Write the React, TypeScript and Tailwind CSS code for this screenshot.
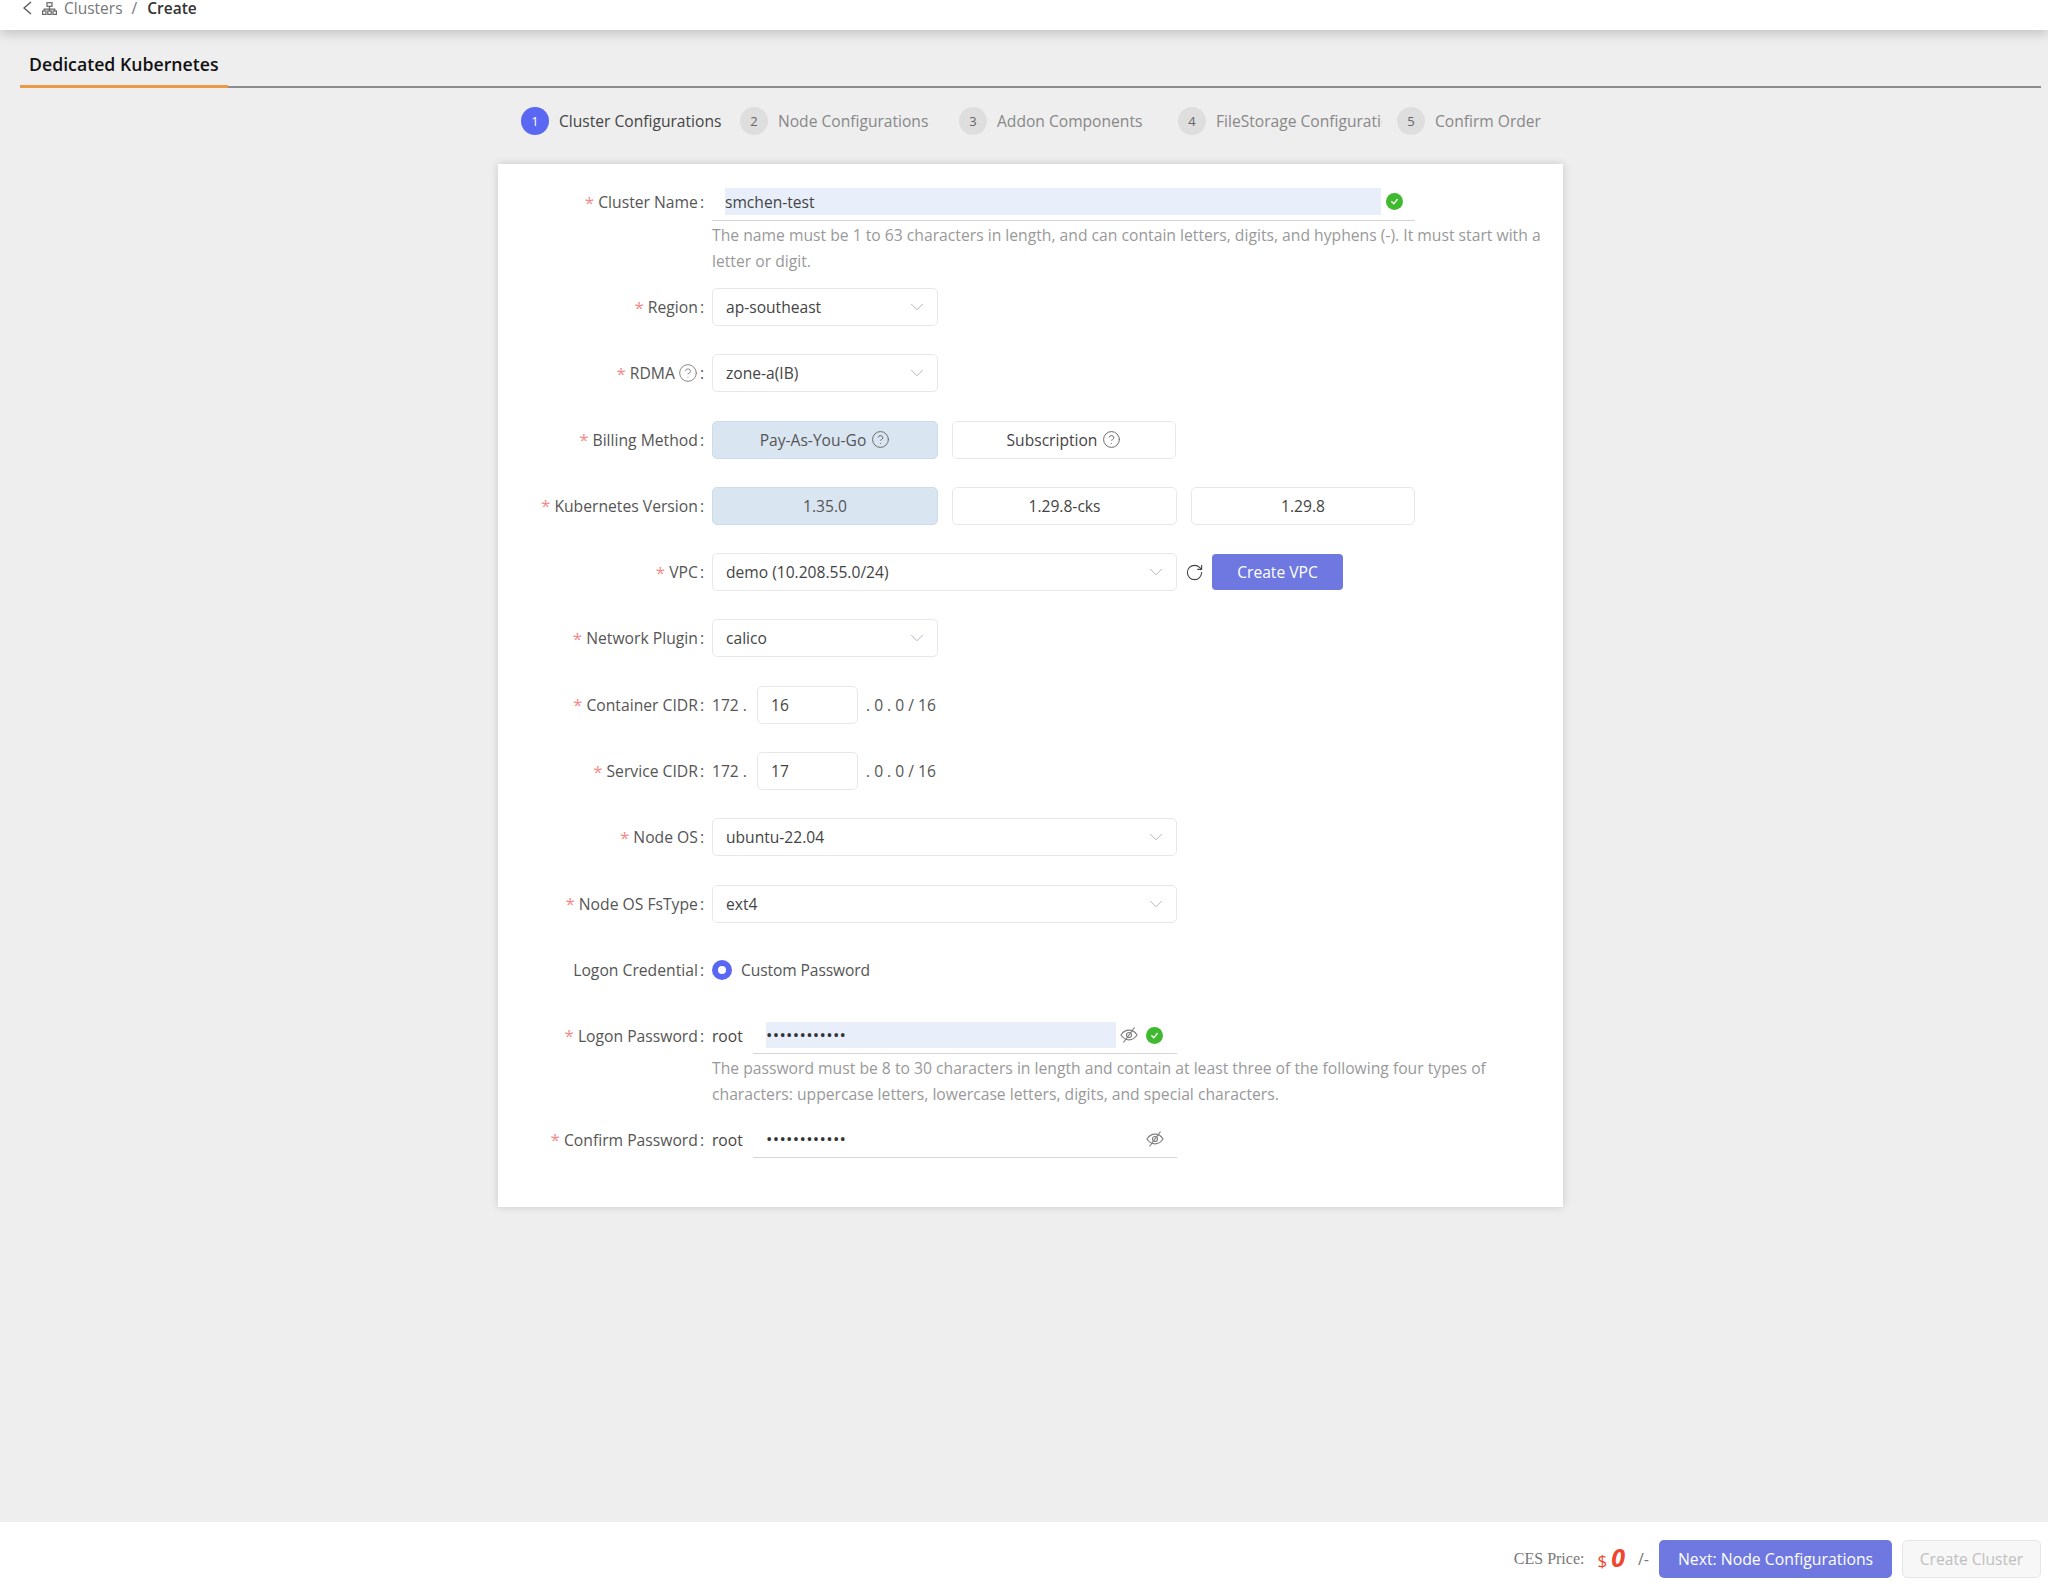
import React from "react";
import { ChevronDown, RotateCw, CircleHelp } from "lucide-react";

const font = "font-['Open_Sans','Noto_Sans',sans-serif]";

function Label({ text, required = true, help = false }: { text: string; required?: boolean; help?: boolean }) {
  return (
    <div className="w-[214px] shrink-0 flex items-center justify-end pr-[8px] text-[#555] text-[15.7px] whitespace-nowrap">
      {required && <span className="text-[#f48a8a] mr-[4px] text-[17px] leading-none">*</span>}
      <span>{text}</span>
      {help && <CircleHelp className="w-[20px] h-[20px] ml-[3px] text-[#888]" strokeWidth={1.2} />}
      <span className="ml-[2px]">:</span>
    </div>
  );
}

function Select({ value, wide = false }: { value: string; wide?: boolean }) {
  return (
    <div className={`${wide ? "w-[465px]" : "w-[226px]"} h-[38px] border-[1.5px] border-[#e8e8ec] rounded-[5px] bg-white flex items-center justify-between pl-[13px] pr-[9px] text-[15.6px] text-[#444]`}>
      <span>{value}</span>
      <ChevronDown className="w-[22px] h-[22px] text-[#aaafbb]" strokeWidth={1} />
    </div>
  );
}

function Row({ label, required = true, help = false, children }: { label: string; required?: boolean; help?: boolean; children: React.ReactNode }) {
  return (
    <div className="flex items-center h-[38px] mb-[28.3px]">
      <Label text={label} required={required} help={help} />
      {children}
    </div>
  );
}

function Choice({ active = false, children, width }: { active?: boolean; children: React.ReactNode; width: string }) {
  return (
    <div className={`${width} h-[38px] rounded-[5px] border-[1.5px] flex items-center justify-center text-[15.6px] ${active ? "bg-[#d9e5f1] border-[#cedbe9] text-[#555]" : "bg-white border-[#e8e8ec] text-[#444]"}`}>
      {children}
    </div>
  );
}

function OkIcon() {
  return (
    <span className="w-[17px] h-[17px] rounded-full bg-[#3fb92f] flex items-center justify-center shrink-0">
      <svg viewBox="0 0 12 12" className="w-[11px] h-[11px]" fill="none" stroke="white" strokeWidth="1.4" strokeLinecap="round" strokeLinejoin="round">
        <path d="M3 6.3 5.2 8.5 9 3.8" />
      </svg>
    </span>
  );
}

function EyeSlash() {
  return (
    <svg viewBox="0 0 18 18" className="w-[18px] h-[18px] shrink-0" fill="none" stroke="#808080" strokeWidth="1.2">
      <path d="M1 9c2-3.2 4.800-4.800 8-4.800s6 1.600 8 4.800c-2 3.200-4.800 4.800-8 4.800S3 12.200 1 9Z" />
      <circle cx="9" cy="9" r="2.500" />
      <path d="M14.500 1.500 3.500 16.500" />
    </svg>
  );
}

function Step({ n, text, active = false, clip = false, last = false }: { n: number; text: string; active?: boolean; clip?: boolean; last?: boolean }) {
  return (
    <div className={`flex items-center ${last ? "" : "w-[219px]"} shrink-0`}>
      <span className={`w-[28px] h-[28px] rounded-full flex items-center justify-center text-[13px] shrink-0 ${active ? "bg-[#5a67f2] text-white" : "bg-[#dedede] text-[#666]"}`}>{n}</span>
      <span className={`ml-[10px] text-[15.6px] whitespace-nowrap ${active ? "text-[#444]" : "text-[#888]"} ${clip ? "w-[166px] overflow-hidden" : ""}`}>{text}</span>
    </div>
  );
}

function CidrRow({ label, value }: { label: string; value: string }) {
  return (
    <Row label={label}>
      <span className="text-[#555] text-[15.6px] w-[45px]">172 .</span>
      <div className="w-[101px] h-[38px] border-[1.5px] border-[#e8e8ec] rounded-[5px] flex items-center pl-[13px] text-[15.6px] text-[#444]">{value}</div>
      <span className="text-[#555] text-[15.6px] ml-[8px]">. 0 . 0 / 16</span>
    </Row>
  );
}

export default function App() {
  return (
    <div className={`${font} leading-[24px] h-[1591px] bg-[#eeeeee] flex flex-col`}>
      <header className="h-[30px] shrink-0 bg-white shadow-[0_4px_12px_rgba(0,0,0,0.18)] flex items-center pb-[14px] pl-[22px] text-[15.5px] relative">
        <svg viewBox="0 0 10 14" className="w-[10px] h-[14px]" fill="none" stroke="#555" strokeWidth="1.3"><path d="M9 1 2 7l7 6" /></svg>
        <svg viewBox="0 0 15 13" className="w-[15px] h-[13px] ml-[10px]" fill="none" stroke="#666" strokeWidth="1.2">
          <rect x="5" y="0.700" width="5" height="3.600" />
          <path d="M7.500 4.300v3M2.200 9V7.200h10.600V9M7.500 7.200V9" />
          <rect x="0.600" y="9" width="3.400" height="3.400" />
          <rect x="5.800" y="9" width="3.400" height="3.400" />
          <rect x="11" y="9" width="3.400" height="3.400" />
        </svg>
        <span className="ml-[7px] text-[#777]">Clusters</span>
        <span className="ml-[9px] text-[#777]">/</span>
        <span className="ml-[10px] font-semibold text-[#333]">Create</span>
      </header>

      <div className="ml-[20px] mr-[7px] h-[58px] border-b-2 border-[#8c8c8c] shrink-0 flex items-end">
        <div className="w-[208px] h-[38px] border-b-[3px] border-[#ec9a45] -mb-[2px] pl-[9px] pt-[2px] text-[17.7px] font-semibold text-[#111] whitespace-nowrap flex items-start">Dedicated Kubernetes</div>
      </div>

      <div className="flex items-center pl-[521px] h-[28px] mt-[19px] shrink-0">
        <Step n={1} text="Cluster Configurations" active />
        <Step n={2} text="Node Configurations" />
        <Step n={3} text="Addon Components" />
        <Step n={4} text="FileStorage Configurations" clip />
        <Step n={5} text="Confirm Order" last />
      </div>

      <main className="ml-[498px] mt-[29px] w-[1065px] h-[1043px] shrink-0 bg-white shadow-[0_0_8px_rgba(0,0,0,0.16)] pt-[19px]">
        <div className="flex h-[38px]">
          <div className="flex items-center h-[38px]"><Label text="Cluster Name" /></div>
          <div className="w-[703px] h-[38px] border-b border-[#d5d5d5] flex items-center pl-[13px] gap-[5px]">
            <div className="w-[656px] h-[27px] bg-[#e8effb] flex items-center text-[15.6px] text-[#444]">smchen-test</div>
            <OkIcon />
          </div>
        </div>
        <p className="ml-[214px] mr-[20px] mt-[2px] mb-[14px] text-[15.7px] leading-[25.5px] text-[#999]">The name must be 1 to 63 characters in length, and can contain letters, digits, and hyphens (-). It must start with a letter or digit.</p>

        <Row label="Region"><Select value="ap-southeast" /></Row>
        <Row label="RDMA" help><Select value="zone-a(IB)" /></Row>
        <Row label="Billing Method">
          <div className="flex gap-[14px]">
            <Choice active width="w-[226px]">Pay-As-You-Go <CircleHelp className="w-[19px] h-[19px] ml-[5px] text-[#666]" strokeWidth={1.2} /></Choice>
            <Choice width="w-[224px]">Subscription <CircleHelp className="w-[19px] h-[19px] ml-[5px] text-[#666]" strokeWidth={1.2} /></Choice>
          </div>
        </Row>
        <Row label="Kubernetes Version">
          <div className="flex gap-[14px]">
            <Choice active width="w-[226px]">1.35.0</Choice>
            <Choice width="w-[225px]">1.29.8-cks</Choice>
            <Choice width="w-[224px]">1.29.8</Choice>
          </div>
        </Row>
        <Row label="VPC">
          <Select value="demo (10.208.55.0/24)" wide />
          <RotateCw className="w-[19px] h-[19px] ml-[8px] text-[#444]" strokeWidth={1.4} />
          <button className="ml-[8px] w-[131px] h-[36px] rounded-[4px] bg-[#6e78e0] text-white text-[15.6px]">Create VPC</button>
        </Row>
        <Row label="Network Plugin"><Select value="calico" /></Row>
        <CidrRow label="Container CIDR" value="16" />
        <CidrRow label="Service CIDR" value="17" />
        <Row label="Node OS"><Select value="ubuntu-22.04" wide /></Row>
        <Row label="Node OS FsType"><Select value="ext4" wide /></Row>
        <Row label="Logon Credential" required={false}>
          <span className="w-[20px] h-[20px] rounded-full bg-[#5a67f2] flex items-center justify-center shrink-0"><span className="w-[8px] h-[8px] rounded-full bg-white" /></span>
          <span className="ml-[9px] text-[15.6px] text-[#555] tracking-[-0.1px]">Custom Password</span>
        </Row>

        <div className="flex h-[37px] items-center">
          <Label text="Logon Password" />
          <span className="w-[41px] text-[15.6px] text-[#444]">root</span>
          <div className="w-[424px] h-[37px] border-b border-[#d5d5d5] flex items-center pl-[13px]">
            <div className="w-[350px] h-[26px] bg-[#e8effb] flex items-center text-[17px] text-[#333] tracking-[0.3px]">••••••••••••</div>
            <span className="ml-[4px]"><EyeSlash /></span>
            <span className="ml-[8px]"><OkIcon /></span>
          </div>
        </div>
        <p className="ml-[214px] mr-[60px] mt-[2px] mb-[14px] text-[15.7px] leading-[25.5px] text-[#999]">The password must be 8 to 30 characters in length and contain at least three of the following four types of characters: uppercase letters, lowercase letters, digits, and special characters.</p>

        <div className="flex h-[37px] items-center">
          <Label text="Confirm Password" />
          <span className="w-[41px] text-[15.6px] text-[#444]">root</span>
          <div className="w-[424px] h-[37px] border-b border-[#d5d5d5] flex items-center justify-between pl-[13px] pr-[13px]">
            <span className="text-[17px] text-[#333] tracking-[0.3px]">••••••••••••</span>
            <EyeSlash />
          </div>
        </div>
      </main>

      <footer className="mt-auto h-[69px] shrink-0 bg-white flex items-center justify-end pr-[7px] pt-[5px] gap-[10px]">
        <span className="font-['Liberation_Serif',serif] text-[16px] text-[#777]">CES Price:</span>
        <span className="ml-[3px] text-[#f0452f] flex items-baseline gap-[4px]"><span className="text-[17px]">$</span><span className="text-[25px] font-bold italic">0</span></span>
        <span className="ml-[3px] text-[#777] text-[16px]">/-</span>
        <button className="w-[233px] h-[38px] rounded-[5px] bg-[#6e78e0] text-white text-[15.8px]">Next: Node Configurations</button>
        <button className="w-[139px] h-[38px] rounded-[5px] bg-[#f7f7f7] border-[1.5px] border-[#e6e6e6] text-[#c0c0c0] text-[15.6px]">Create Cluster</button>
      </footer>
    </div>
  );
}
